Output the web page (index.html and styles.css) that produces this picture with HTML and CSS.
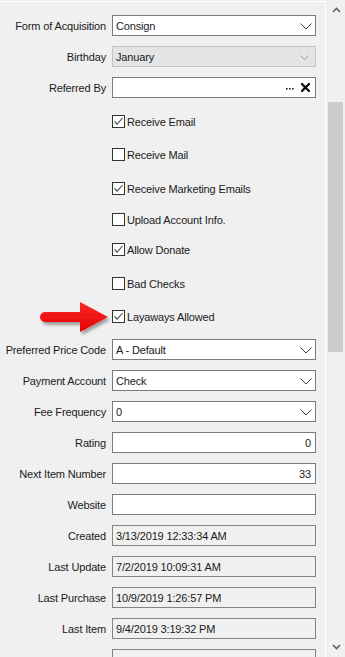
FILE: index.html
```html
<!DOCTYPE html>
<html>
<head>
<meta charset="utf-8">
<link rel="stylesheet" href="styles.css">
</head>
<body>
<div class="window">
  <div class="panel">
    <div class="row">
      <span class="lbl">Form of Acquisition</span>
      <div class="box combo"><span class="val">Consign</span>
        <svg class="chev" width="12" height="7" viewBox="0 0 12 7"><path d="M0.5 0.5 L6 6 L11.5 0.5" fill="none" stroke="#3a3a3a" stroke-width="1"/></svg>
      </div>
    </div>
    <div class="row">
      <span class="lbl">Birthday</span>
      <div class="box combo disabled"><span class="val">January</span>
        <svg class="chev small" width="9" height="5" viewBox="0 0 9 5"><path d="M0.5 0.5 L4.5 4.5 L8.5 0.5" fill="none" stroke="#9a9a9a" stroke-width="1"/></svg>
      </div>
    </div>
    <div class="row">
      <span class="lbl">Referred By</span>
      <div class="box"><span class="val"></span>
        <svg class="dots" width="8" height="3" viewBox="0 0 8 3"><rect x="0" y="1" width="1.6" height="1.6" fill="#222"/><rect x="3" y="1" width="1.6" height="1.6" fill="#222"/><rect x="6" y="1" width="1.6" height="1.6" fill="#222"/></svg>
        <svg class="xicon" width="9" height="9" viewBox="0 0 9 9"><path d="M1 1 L8 8 M8 1 L1 8" stroke="#111" stroke-width="2.3" stroke-linecap="square"/></svg>
      </div>
    </div>

    <div class="checks">
      <div class="check"><span class="cb"><svg width="11" height="11" viewBox="0 0 11 11"><path d="M1.5 5.5 L4.2 8.2 L9.5 2" fill="none" stroke="#4a4a4a" stroke-width="1.1"/></svg></span><span>Receive Email</span></div>
      <div class="check g20"><span class="cb"></span><span>Receive Mail</span></div>
      <div class="check g21"><span class="cb"><svg width="11" height="11" viewBox="0 0 11 11"><path d="M1.5 5.5 L4.2 8.2 L9.5 2" fill="none" stroke="#4a4a4a" stroke-width="1.1"/></svg></span><span>Receive Marketing Emails</span></div>
      <div class="check g18"><span class="cb"></span><span>Upload Account Info.</span></div>
      <div class="check g17"><span class="cb"><svg width="11" height="11" viewBox="0 0 11 11"><path d="M1.5 5.5 L4.2 8.2 L9.5 2" fill="none" stroke="#4a4a4a" stroke-width="1.1"/></svg></span><span>Allow Donate</span></div>
      <div class="check g21"><span class="cb"></span><span>Bad Checks</span></div>
      <div class="check g20"><span class="cb"><svg width="11" height="11" viewBox="0 0 11 11"><path d="M1.5 5.5 L4.2 8.2 L9.5 2" fill="none" stroke="#4a4a4a" stroke-width="1.1"/></svg></span><span>Layaways Allowed</span></div>
    </div>

    <div class="row">
      <span class="lbl">Preferred Price Code</span>
      <div class="box combo"><span class="val">A - Default</span>
        <svg class="chev" width="12" height="7" viewBox="0 0 12 7"><path d="M0.5 0.5 L6 6 L11.5 0.5" fill="none" stroke="#3a3a3a" stroke-width="1"/></svg>
      </div>
    </div>
    <div class="row">
      <span class="lbl">Payment Account</span>
      <div class="box combo"><span class="val">Check</span>
        <svg class="chev" width="12" height="7" viewBox="0 0 12 7"><path d="M0.5 0.5 L6 6 L11.5 0.5" fill="none" stroke="#3a3a3a" stroke-width="1"/></svg>
      </div>
    </div>
    <div class="row">
      <span class="lbl">Fee Frequency</span>
      <div class="box combo"><span class="val">0</span>
        <svg class="chev" width="12" height="7" viewBox="0 0 12 7"><path d="M0.5 0.5 L6 6 L11.5 0.5" fill="none" stroke="#3a3a3a" stroke-width="1"/></svg>
      </div>
    </div>
    <div class="row">
      <span class="lbl">Rating</span>
      <div class="box num"><span class="val">0</span></div>
    </div>
    <div class="row">
      <span class="lbl">Next Item Number</span>
      <div class="box num"><span class="val">33</span></div>
    </div>
    <div class="row">
      <span class="lbl">Website</span>
      <div class="box"><span class="val"></span></div>
    </div>
    <div class="row">
      <span class="lbl">Created</span>
      <div class="box readonly"><span class="val">3/13/2019 12:33:34 AM</span></div>
    </div>
    <div class="row">
      <span class="lbl">Last Update</span>
      <div class="box readonly"><span class="val">7/2/2019 10:09:31 AM</span></div>
    </div>
    <div class="row">
      <span class="lbl">Last Purchase</span>
      <div class="box readonly"><span class="val">10/9/2019 1:26:57 PM</span></div>
    </div>
    <div class="row">
      <span class="lbl">Last Item</span>
      <div class="box readonly"><span class="val">9/4/2019 3:19:32 PM</span></div>
    </div>
    <div class="row">
      <span class="lbl"></span>
      <div class="box readonly"><span class="val"></span></div>
    </div>
  </div>

  <div class="scrollbar">
    <div class="sb-btn">
      <svg width="9" height="6" viewBox="0 0 9 6"><path d="M1 5 L4.5 1.5 L8 5" fill="none" stroke="#606060" stroke-width="1.6"/></svg>
    </div>
    <div class="sb-track"><div class="sb-thumb"></div></div>
    <div class="sb-btn">
      <svg width="9" height="6" viewBox="0 0 9 6"><path d="M1 1 L4.5 4.5 L8 1" fill="none" stroke="#606060" stroke-width="1.6"/></svg>
    </div>
  </div>

  <svg class="callout" width="76" height="42" viewBox="0 0 76 42">
    <defs>
      <linearGradient id="rg" x1="0" y1="0" x2="0" y2="1">
        <stop offset="0" stop-color="#ff2a2a"/>
        <stop offset="1" stop-color="#e00000"/>
      </linearGradient>
      <filter id="sh" x="-20%" y="-20%" width="150%" height="160%">
        <feDropShadow dx="2" dy="3" stdDeviation="1.8" flood-color="#000" flood-opacity="0.35"/>
      </filter>
    </defs>
    <g filter="url(#sh)">
      <path d="M9 14 L44 14 L44 4 L72 19 L44 34 L44 24 L9 24 A5 5 0 0 1 9 14 Z" fill="url(#rg)"/>
    </g>
  </svg>
</div>
</body>
</html>
```
FILE: styles.css
```css
* { box-sizing: border-box; }

body {
  margin: 0;
  background: #f0f0f0;
  font-family: "Liberation Sans", Arial, sans-serif;
  font-size: 11px;
  letter-spacing: -0.15px;
  color: #1a1a1a;
  width: 345px;
  height: 657px;
  overflow: hidden;
}

.window {
  position: relative;
  display: flex;
  height: 657px;
}

.panel {
  width: 326px;
  flex: none;
  margin-top: 1px;
  border-top: 1px solid #ffffff;
  border-right: 1px solid #ffffff;
  padding-top: 13px;
}

.row {
  display: flex;
  align-items: center;
  height: 21px;
  margin-bottom: 10px;
}

.lbl {
  width: 106px;
  flex: none;
  text-align: right;
  white-space: nowrap;
}

.box {
  margin-left: 6px;
  width: 204px;
  height: 21px;
  flex: none;
  border: 1px solid #7a7a7a;
  background: #ffffff;
  display: flex;
  align-items: center;
  padding: 0 3px 0 3px;
  white-space: nowrap;
}

.val { flex: 1; }

.num .val { text-align: right; padding-right: 1px; }

.box.disabled {
  background: #e4e4e4;
  border-color: #c4c4c4;
}

.box.readonly {
  background: #f0f0f0;
  border-color: #838383;
}

.chev { flex: none; margin-right: 0; margin-top: 1px; }
.chev.small { margin-right: 3px; }

.dots { flex: none; margin-right: 7px; margin-top: 2px; }
.xicon { flex: none; margin-right: 2px; }

.checks {
  padding-left: 112px;
  padding-top: 7px;
  padding-bottom: 6px;
  margin-bottom: 10px;
}

.check {
  display: flex;
  align-items: center;
  gap: 2px;
  height: 13px;
  white-space: nowrap;
}

.check.g17 { margin-top: 17px; }
.check.g18 { margin-top: 18px; }
.check.g20 { margin-top: 20px; }
.check.g21 { margin-top: 21px; }

.cb {
  width: 13px;
  height: 13px;
  flex: none;
  border: 1px solid #333333;
  background: #ffffff;
  display: flex;
  align-items: center;
  justify-content: center;
}

.scrollbar {
  width: 18px;
  margin-left: 1px;
  display: flex;
  flex-direction: column;
  background: #f0f0f0;
}

.sb-btn {
  height: 20px;
  display: flex;
  align-items: center;
  justify-content: center;
  padding-left: 0;
}

.sb-track {
  flex: 1;
}

.sb-thumb {
  margin: 82px 2px 0 1px;
  height: 250px;
  background: #cdcdcd;
}

.callout {
  position: absolute;
  left: 36px;
  top: 298px;
}
```
